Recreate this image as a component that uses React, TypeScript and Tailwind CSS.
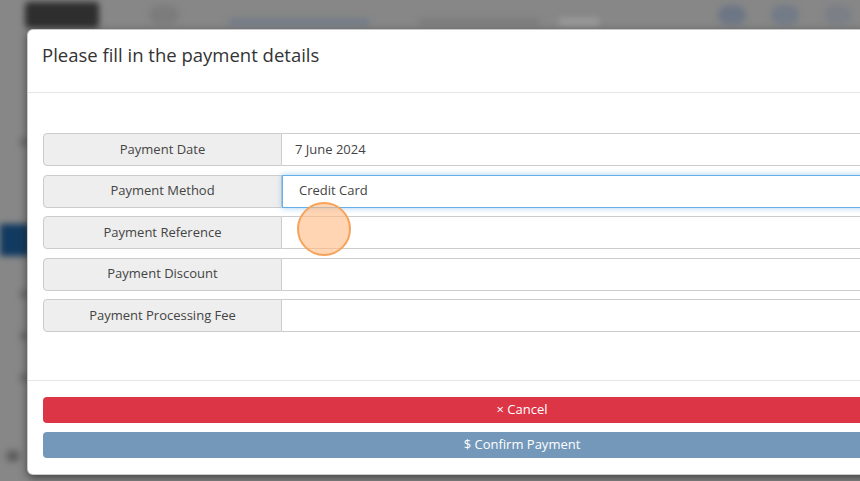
import React from "react";

const rows = [
  { label: "Payment Date", value: "7 June 2024", focus: false },
  { label: "Payment Method", value: "Credit Card", focus: true },
  { label: "Payment Reference", value: "", focus: false },
  { label: "Payment Discount", value: "", focus: false },
  { label: "Payment Processing Fee", value: "", focus: false },
];

export default function App() {
  return (
    <div
      className="relative w-[860px] h-[481px] overflow-hidden bg-[#878787]"
      style={{ fontFamily: "'Open Sans', Lato, sans-serif" }}
    >
      {/* blurred page behind the overlay */}
      <div className="absolute inset-0 blur-[3px] flex flex-col">
        <div className="h-[30px] flex items-center gap-[50px] pl-[25px] pr-[8px]">
          <div className="w-[74px] h-[26px] rounded bg-[#2e2e2e]" />
          <div className="w-[30px] h-[20px] rounded-full bg-[#7c7c7c]" />
          <div className="w-[140px] h-[6px] bg-[#6f7a8a] mt-[14px]" />
          <div className="w-[120px] h-[6px] bg-[#7a7a7a] mt-[14px]" />
          <div className="w-[40px] h-[8px] bg-[#9a9a9a] mt-[14px] -ml-[30px]" />
          <div className="flex-1" />
          <div className="w-[28px] h-[20px] rounded-full bg-[#6d7685]" />
          <div className="w-[28px] h-[20px] rounded-full bg-[#737b88] -ml-[25px]" />
          <div className="w-[28px] h-[20px] rounded-full bg-[#7b7f86] -ml-[25px]" />
        </div>
        <div className="w-[30px] flex-1 flex flex-col pt-[108px] gap-[34px]">
          <div className="w-[8px] h-[8px] ml-[20px] bg-[#6a6a6a]" />
          <div className="w-[30px] h-[32px] bg-[#123a60] mt-[44px]" />
          <div className="w-[8px] h-[8px] ml-[20px] bg-[#6a6a6a]" />
          <div className="w-[8px] h-[8px] ml-[20px] bg-[#6a6a6a]" />
          <div className="w-[8px] h-[8px] ml-[20px] bg-[#6a6a6a]" />
          <div className="w-[14px] h-[12px] ml-[6px] rounded-full bg-[#5e5e5e] mt-[34px]" />
        </div>
      </div>

      {/* modal */}
      <div className="relative ml-[27px] mt-[29px] w-[990px] h-[446px] rounded-[6px] bg-white border border-black/20 shadow-[0_3px_9px_rgba(0,0,0,0.5)] flex flex-col">
        <div className="h-[63px] shrink-0 border-b border-[#e5e5e5] pl-[14px] pt-[14px]">
          <h4 className="text-[18.5px] text-[#333] leading-[22px]">Please fill in the payment details</h4>
        </div>
        <div className="h-[288px] shrink-0 border-b border-[#e5e5e5] pt-[40px] px-[15px] flex flex-col gap-[8.5px]">
          {rows.map((r) => (
            <div key={r.label} className="flex h-[33px]">
              <div className="w-[239px] shrink-0 flex items-center justify-center bg-[#eeeeee] border border-[#cccccc] rounded-l-[4px] text-[13px] text-[#444]">
                {r.label}
              </div>
              <div
                className={
                  r.focus
                    ? "flex-1 flex items-center pl-[16px] border border-[#66afe9] shadow-[0_0_6px_rgba(102,175,233,0.6)] text-[13px] text-[#444] bg-white"
                    : "flex-1 flex items-center pl-[13px] border border-l-0 border-[#cccccc] text-[13px] text-[#444] bg-white"
                }
              >
                {r.value}
              </div>
            </div>
          ))}
        </div>
        <div className="flex-1 px-[15px] pt-[16px] flex flex-col gap-[9px]">
          <button className="h-[26px] w-full rounded-[4px] bg-[#dc3545] text-white text-[13px] flex items-center justify-center">
            × Cancel
          </button>
          <button className="h-[26px] w-full rounded-[4px] bg-[#7398ba] text-white text-[13px] flex items-center justify-center">
            $ Confirm Payment
          </button>
        </div>

        {/* click indicator */}
        <div className="absolute left-[269px] top-[172px] w-[54px] h-[54px] rounded-full bg-[#ffb980]/60 border-2 border-[#f5a35a]" />
      </div>
    </div>
  );
}
